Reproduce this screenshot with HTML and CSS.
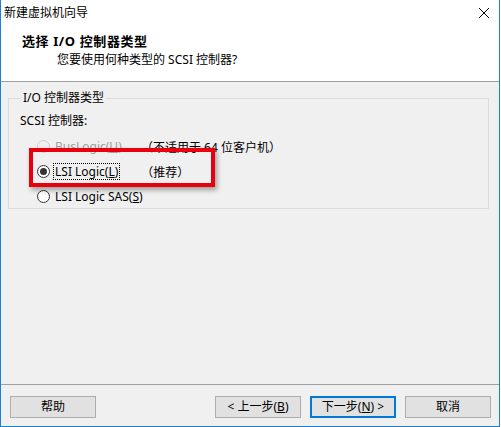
FILE: index.html
```html
<!DOCTYPE html>
<html lang="zh-CN">

<head>
    <meta charset="UTF-8">
    <title>新建虚拟机向导</title>
    <link rel="stylesheet" href="styles.css">
</head>

<body>
    <div class="window">
        <div class="titlebar">
            <span class="title">新建虚拟机向导</span>
            <span class="close">
                <svg width="12" height="12" viewBox="0 0 12 12">
                    <path d="M1 1 L11 11 M11 1 L1 11" stroke="#000" stroke-width="1"/>
                </svg>
            </span>
        </div>

        <div class="header">
            <h1>选择 I/O 控制器类型</h1>
            <p>您要使用何种类型的 SCSI 控制器?</p>
        </div>

        <div class="content">
            <fieldset class="group">
                <legend>I/O 控制器类型</legend>
                <div class="label">SCSI 控制器:</div>

                <div class="option disabled">
                    <span class="radio"></span>
                    <span class="name">BusLogic(<u>U</u>)</span>
                    <span class="note">（不适用于 64 位客户机）</span>
                </div>
                <div class="option">
                    <span class="radio checked"></span>
                    <span class="name focus">LSI Logic(<u>L</u>)</span>
                    <span class="note">（推荐）</span>
                </div>
                <div class="option">
                    <span class="radio"></span>
                    <span class="name">LSI Logic SAS(<u>S</u>)</span>
                </div>
            </fieldset>

            <!-- 标注框 -->
            <div class="highlight"></div>
        </div>

        <div class="footer">
            <button class="btn">帮助</button>
            <div class="spacer"></div>
            <button class="btn">&lt; 上一步(<u>B</u>)</button>
            <button class="btn primary">下一步(<u>N</u>) &gt;</button>
            <button class="btn">取消</button>
        </div>
    </div>
</body>

</html>
```

FILE: styles.css
```css
* {
    margin: 0;
    padding: 0;
    box-sizing: border-box;
}

body {
    font-family: "Noto Sans", "Noto Sans CJK SC", sans-serif;
    font-size: 12px;
    color: #000;
    background: #fff;
}

.window {
    width: 500px;
    height: 427px;
    border: 1px solid #1b7fd6;
    border-top: none;
    background: #f0f0f0;
    display: flex;
    flex-direction: column;
}

.titlebar {
    height: 30px;
    background: #fff;
    display: flex;
    align-items: flex-start;
    justify-content: space-between;
    padding: 4px 9px 0 3px;
    line-height: 18px;
}

.close {
    display: flex;
    padding-top: 3px;
}

.header {
    height: 52px;
    background: #fff;
    border-bottom: 1px solid #a0a0a0;
    padding: 2px 0 0 21px;
}

.header h1 {
    font-size: 13px;
    letter-spacing: 0.6px;
    font-weight: bold;
    line-height: 18px;
}

.header p {
    line-height: 18px;
    padding-left: 35px;
    margin-top: 1px;
}

.content {
    flex: 1;
    position: relative;
    padding: 8px 10px 0 7px;
}

.group {
    border: 1px solid #dcdcdc;
    height: 119px;
    padding: 0 0 0 11px;
}

.group legend {
    margin-left: 1px;
    padding: 0 2px;
    line-height: 16px;
}

.label {
    line-height: 18px;
    margin-top: 6px;
    margin-bottom: 4px;
}

.option {
    display: flex;
    align-items: center;
    height: 25px;
    padding-left: 17px;
}

.option .radio {
    width: 13px;
    height: 13px;
    border: 1px solid #333;
    border-radius: 50%;
    background: #fff;
    margin-right: 3px;
    display: flex;
    align-items: center;
    justify-content: center;
    flex-shrink: 0;
}

.option .radio.checked::after {
    content: "";
    width: 7px;
    height: 7px;
    border-radius: 50%;
    background: #333;
}

.option .name {
    width: 88px;
    line-height: 15px;
    padding: 0 1px;
    white-space: nowrap;
    border: 1px solid transparent;
}

.option .name.focus {
    width: auto;
    border: 1px dotted #000;
    margin-right: 21px;
}

.option .note {
    white-space: nowrap;
}

.option.disabled {
    color: #a0a0a0;
}

.option.disabled .radio {
    border-color: #cccccc;
    background: #f0f0f0;
}

.option.disabled .note {
    color: #000;
}

.highlight {
    position: absolute;
    left: 28px;
    top: 66px;
    width: 186px;
    height: 39px;
    border: 4px solid #e8000d;
    box-shadow: 2px 3px 5px rgba(0, 0, 0, 0.35);
}

.footer {
    height: 42px;
    border-top: 1px solid #a0a0a0;
    display: flex;
    align-items: flex-start;
    padding: 11px 8px 0 9px;
    gap: 9px;
}

.spacer {
    flex: 1;
}

.btn {
    width: 86px;
    height: 22px;
    border: 1px solid #adadad;
    background: #e1e1e1;
    font-family: inherit;
    font-size: 12px;
    color: #000;
    line-height: 18px;
}

.btn.primary {
    border: 2px solid #0078d7;
}
```
